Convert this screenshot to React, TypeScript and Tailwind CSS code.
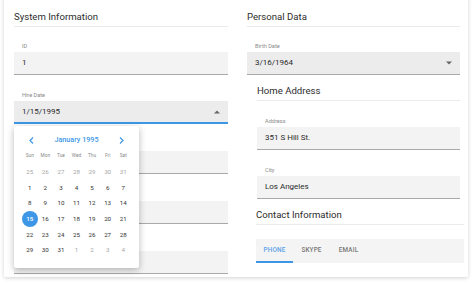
import React from "react";

const font = { fontFamily: "Roboto, 'Noto Sans', sans-serif" };

function Heading({ children, className = "" }: { children: React.ReactNode; className?: string }) {
  return (
    <div className={"h-[19px] border-b border-[#ebebeb] text-[9.6px] leading-[18px] text-[#2d2d2d] " + className}>
      {children}
    </div>
  );
}

function Field({
  label,
  value,
  className = "",
  focused = false,
  arrow,
  darker = false,
}: {
  label?: string;
  value?: string;
  className?: string;
  focused?: boolean;
  arrow?: "up" | "down";
  darker?: boolean;
}) {
  return (
    <div className={className}>
      <div className="h-[8px] pl-[8px] text-[5.6px] leading-[8px] text-[#8a8a8a]">{label}</div>
      <div
        className={
          "mt-[2px] flex h-[23px] items-center justify-between pl-[8px] pr-[8px] text-[8px] text-[#2a2a2a] " +
          (darker ? "bg-[#ececec] " : "bg-[#f3f3f3] ") +
          (focused ? "border-b-2 border-[#3d97e6]" : "border-b border-[#a9a9a9]")
        }
      >
        <span className="leading-none">{value}</span>
        {arrow === "up" && (
          <svg width="6" height="4" viewBox="0 0 6 4">
            <path d="M0 3.5 L3 0.5 L6 3.5 Z" fill="#666" />
          </svg>
        )}
        {arrow === "down" && (
          <svg width="6" height="4" viewBox="0 0 6 4">
            <path d="M0 0.5 L3 3.5 L6 0.5 Z" fill="#666" />
          </svg>
        )}
      </div>
    </div>
  );
}

const days: { d: number; muted?: boolean; sel?: boolean }[] = [
  ...[25, 26, 27, 28, 29, 30, 31].map((d) => ({ d, muted: true })),
  ...Array.from({ length: 31 }, (_, i) => ({ d: i + 1, sel: i + 1 === 15 })),
  ...[1, 2, 3, 4].map((d) => ({ d, muted: true })),
];

function Calendar() {
  return (
    <div className="absolute left-0 top-[35px] z-10 h-[142px] w-[125px] rounded-[2px] bg-white pt-[6px] shadow-[0_2px_7px_rgba(0,0,0,0.28)]">
      <div className="flex h-[16px] items-center justify-between px-[15px]">
        <svg width="5" height="7" viewBox="0 0 5 7">
          <path d="M4 0.5 L1 3.5 L4 6.5" fill="none" stroke="#3d97e6" strokeWidth="1.2" />
        </svg>
        <span className="text-[7.2px] font-medium leading-none text-[#3d97e6]">January 1995</span>
        <svg width="5" height="7" viewBox="0 0 5 7">
          <path d="M1 0.5 L4 3.5 L1 6.5" fill="none" stroke="#3d97e6" strokeWidth="1.2" />
        </svg>
      </div>
      <div className="ml-[8px] mt-[1px] grid w-[109px] grid-cols-7 auto-rows-[15.6px]">
        {["Sun", "Mon", "Tue", "Wed", "Thu", "Fri", "Sat"].map((n) => (
          <div key={n} className="flex items-center justify-center text-[4.8px] leading-none text-[#8a8a8a]">
            {n}
          </div>
        ))}
        {days.map((x, i) => (
          <div key={i} className="flex items-center justify-center">
            {x.sel ? (
              <div className="flex h-[16px] w-[16px] items-center justify-center rounded-full bg-[#3d97e6] text-[6.2px] font-medium leading-none text-white">
                {x.d}
              </div>
            ) : (
              <span className={"text-[6.2px] leading-none " + (x.muted ? "text-[#a8a8a8]" : "text-[#333]")}>{x.d}</span>
            )}
          </div>
        ))}
      </div>
    </div>
  );
}

export default function App() {
  return (
    <div className="h-[284px] w-[474px] overflow-hidden bg-white" style={font}>
      <div className="ml-[4px] mt-[-6px] flex h-[283px] w-[464px] gap-[19px] rounded-[2px] bg-white pl-[10px] pt-[14px] shadow-[0_1px_4px_rgba(0,0,0,0.18)]">
        <div className="relative w-[214px]">
          <Heading>System Information</Heading>
          <Field className="mt-[15px]" label="ID" value="1" />
          <div className="relative mt-[16px]">
            <Field label="Hire Date" value="1/15/1995" focused arrow="up" darker />
            <Calendar />
          </div>
          <Field className="mt-[17px]" />
          <Field className="mt-[17px]" />
          <Field className="mt-[17px]" />
        </div>
        <div className="w-[213px]">
          <Heading>Personal Data</Heading>
          <Field className="mt-[15px]" label="Birth Date" value="3/16/1964" arrow="down" darker />
          <div className="pl-[10px]">
            <Heading className="mt-[7px]">Home Address</Heading>
            <Field className="mt-[16px]" label="Address" value="351 S Hill St." />
            <Field className="mt-[16px]" label="City" value="Los Angeles" />
          </div>
          <div className="mr-[-4px] pl-[9px]">
            <Heading className="mt-[7px]">Contact Information</Heading>
            <div className="mt-[14px] flex h-[24px] bg-[#f4f4f4]">
              <div className="flex w-[37px] items-center justify-center border-b-2 border-[#3d97e6] pt-[2px] text-[6.3px] font-medium tracking-[0.2px] text-[#5aa3e8]">
                PHONE
              </div>
              <div className="flex w-[37px] items-center justify-center pb-[2px] pt-[2px] text-[6.3px] font-medium tracking-[0.2px] text-[#777]">
                SKYPE
              </div>
              <div className="flex w-[37px] items-center justify-center pb-[2px] pt-[2px] text-[6.3px] font-medium tracking-[0.2px] text-[#777]">
                EMAIL
              </div>
            </div>
          </div>
        </div>
      </div>
    </div>
  );
}
